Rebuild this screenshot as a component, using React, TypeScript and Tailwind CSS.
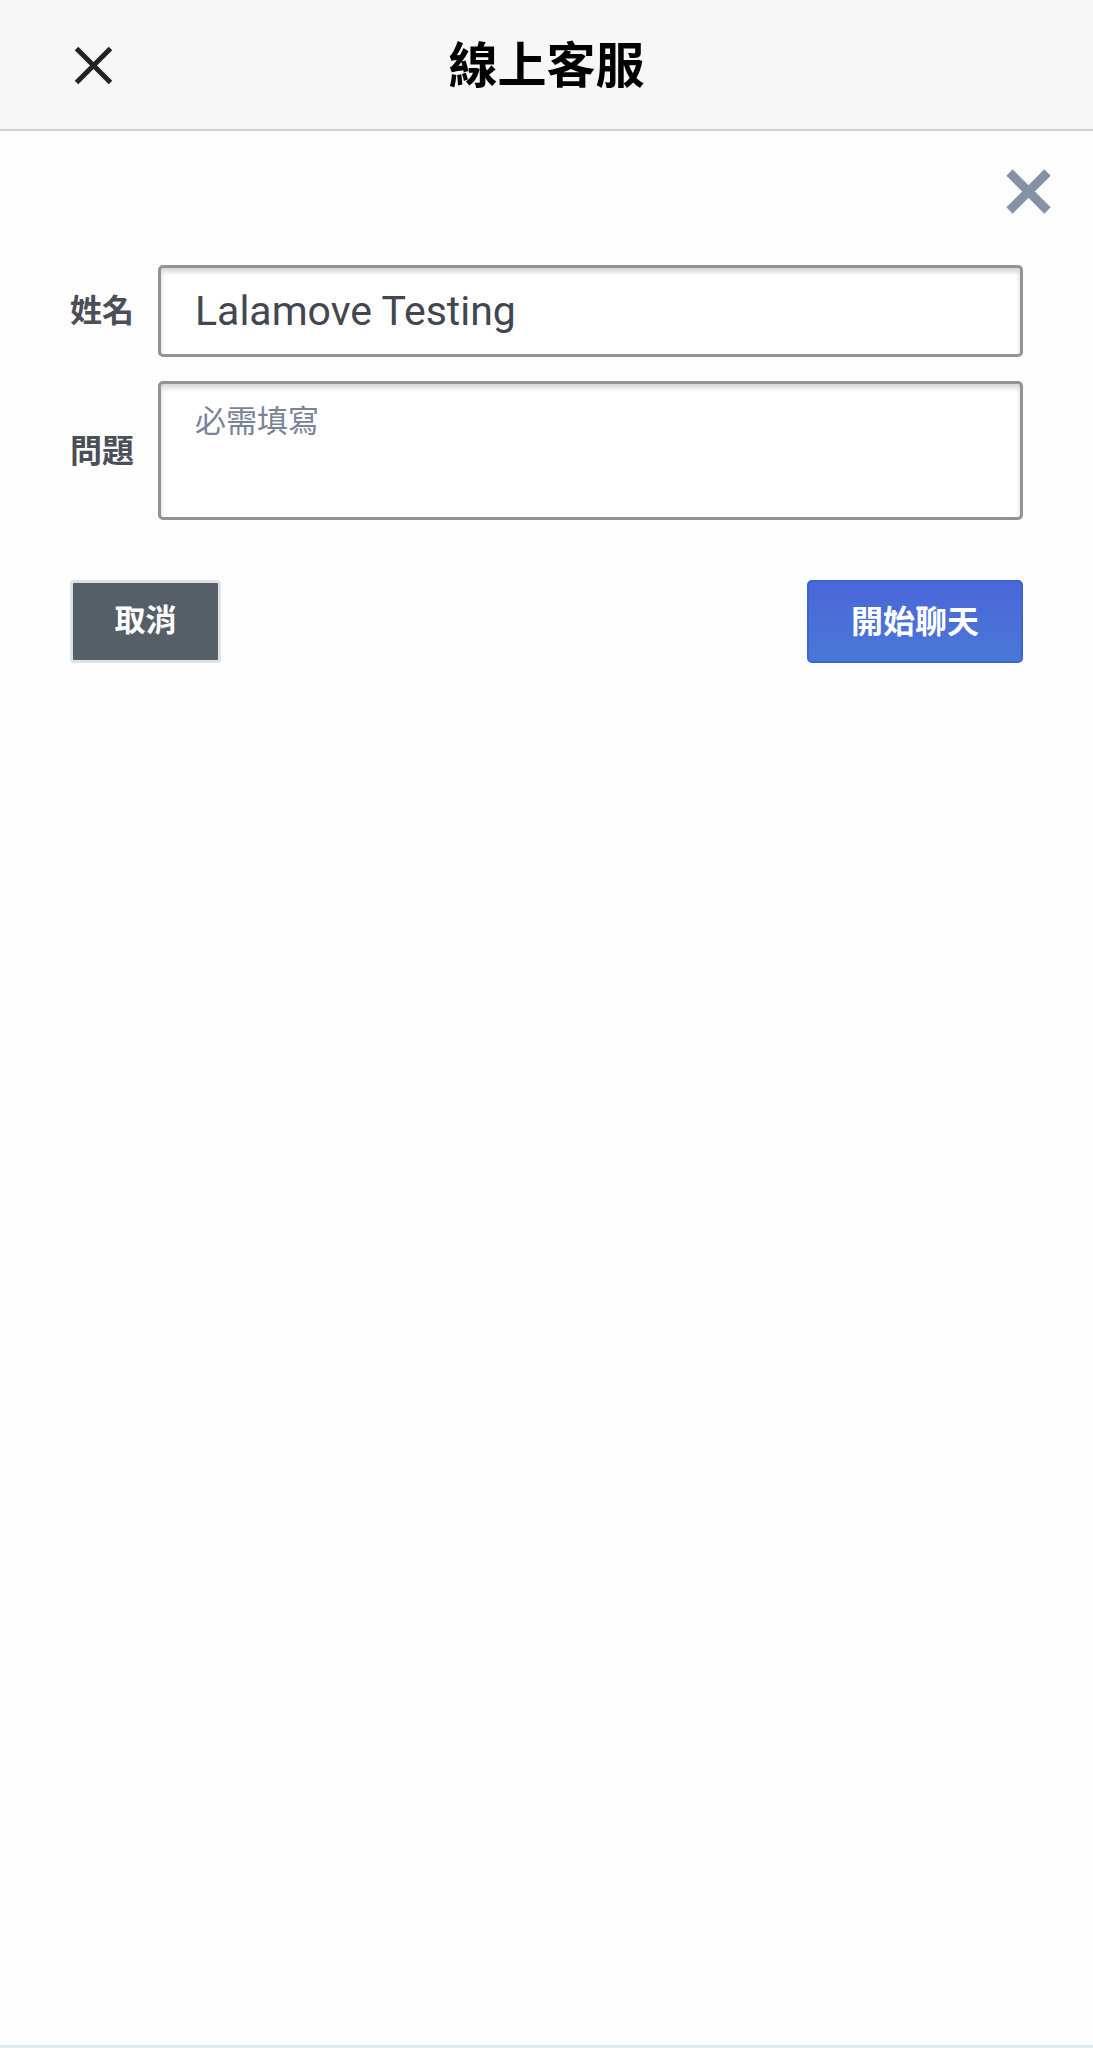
import React from "react";

const font = { fontFamily: 'Roboto, "Noto Sans CJK TC", sans-serif' };

function CrossIcon({ size, stroke, color }: { size: number; stroke: number; color: string }) {
  const p = stroke / 2;
  return (
    <svg width={size} height={size} viewBox={`0 0 ${size} ${size}`}>
      <line x1={p} y1={p} x2={size - p} y2={size - p} stroke={color} strokeWidth={stroke} />
      <line x1={size - p} y1={p} x2={p} y2={size - p} stroke={color} strokeWidth={stroke} />
    </svg>
  );
}

export default function App() {
  return (
    <div className="w-[1093px] h-[2048px] flex flex-col bg-[#fdfdfd]" style={font}>
      {/* Header */}
      <header className="h-[131px] shrink-0 bg-[#f7f7f7] border-b-2 border-[#cfcfcf] relative flex items-center justify-center">
        <button className="absolute left-[74px] top-[46px]">
          <CrossIcon size={39} stroke={5} color="#222222" />
        </button>
        <h1 className="text-[49px] font-semibold text-black leading-none mt-[4px]">線上客服</h1>
      </header>

      {/* Body */}
      <main className="flex-1 flex flex-col border-b-[3px] border-[#dde7ef]">
        <div className="flex justify-end pr-[41px] pt-[37px]">
          <button>
            <CrossIcon size={47} stroke={9} color="#8592a3" />
          </button>
        </div>

        <div className="px-[70px] mt-[50px] flex flex-col gap-[24px]">
          <div className="flex items-center">
            <label className="w-[88px] shrink-0 text-[32px] font-bold text-[#4b4f57] leading-none">姓名</label>
            <input
              defaultValue="Lalamove Testing"
              className="flex-1 h-[92px] rounded-[5px] border-[3px] border-[#94948d] bg-white pl-[34px] text-[41px] text-[#414651] shadow-[inset_0_4px_5px_rgba(0,0,0,0.16)] outline-none"
              style={font}
            />
          </div>
          <div className="flex items-center">
            <label className="w-[88px] shrink-0 text-[32px] font-bold text-[#4b4f57] leading-none">問題</label>
            <textarea
              placeholder="必需填寫"
              className="flex-1 h-[139px] rounded-[5px] border-[3px] border-[#94948d] bg-white pl-[34px] pt-[22px] text-[31px] leading-none resize-none text-[#414651] placeholder:text-[#7b8496] shadow-[inset_0_4px_5px_rgba(0,0,0,0.16)] outline-none"
              style={font}
            />
          </div>
        </div>

        <div className="px-[70px] mt-[60px] flex justify-between">
          <button className="w-[151px] h-[83px] rounded-[4px] border-[3px] border-[#dbe2e8] bg-[#565e68] text-white text-[31px] font-bold">
            取消
          </button>
          <button className="w-[216px] h-[83px] rounded-[5px] border-2 border-[#3b63d3] bg-gradient-to-b from-[#4b66d9] to-[#4878d7] text-white text-[32px] font-bold">
            開始聊天
          </button>
        </div>
      </main>
    </div>
  );
}
